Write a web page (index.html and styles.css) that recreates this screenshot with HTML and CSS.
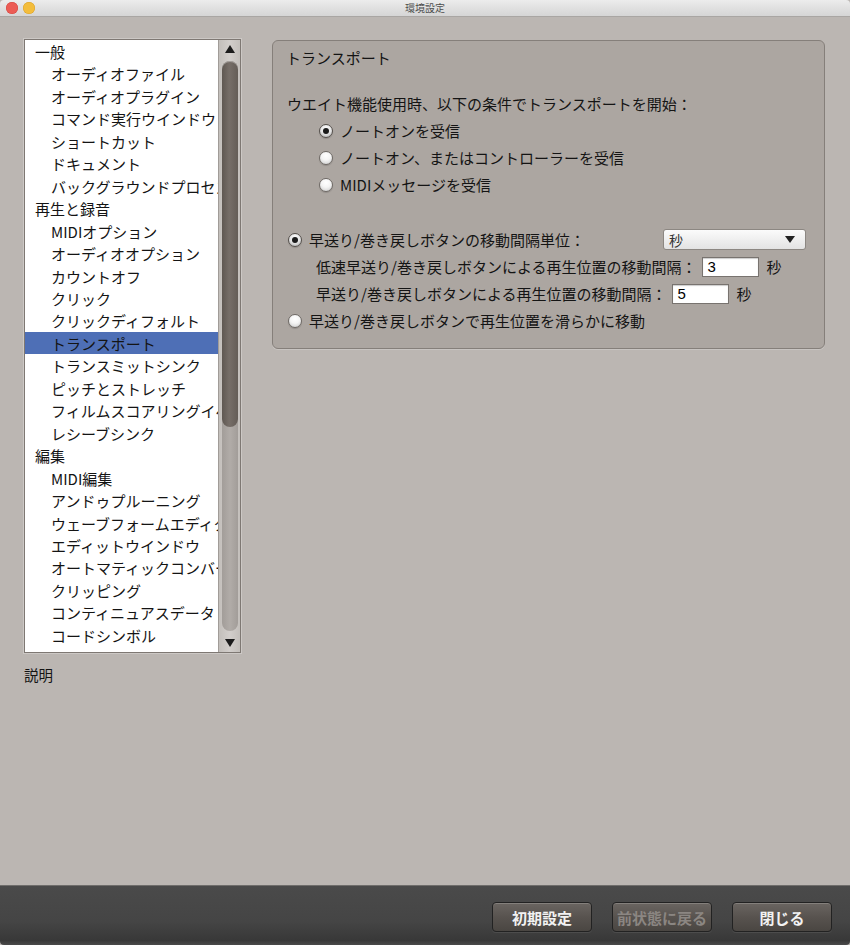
FILE: index.html
```html
<!DOCTYPE html>
<html lang="ja">
<head>
<meta charset="utf-8">
<title>環境設定</title>
<link rel="stylesheet" href="styles.css">
</head>
<body>
<div class="window">
  <header class="titlebar">
    <div class="lights"><i class="light red"></i><i class="light yellow"></i></div>
    <div class="title">環境設定</div>
    <div></div>
  </header>

  <main class="content">
    <aside class="sidebar">
      <div class="listbox">
        <ul class="tree">
          <li class="cat">一般</li>
          <li>オーディオファイル</li>
          <li>オーディオプラグイン</li>
          <li>コマンド実行ウインドウ</li>
          <li>ショートカット</li>
          <li>ドキュメント</li>
          <li>バックグラウンドプロセス</li>
          <li class="cat">再生と録音</li>
          <li>MIDIオプション</li>
          <li>オーディオオプション</li>
          <li>カウントオフ</li>
          <li>クリック</li>
          <li>クリックディフォルト</li>
          <li class="selected">トランスポート</li>
          <li>トランスミットシンク</li>
          <li>ピッチとストレッチ</li>
          <li>フィルムスコアリングイベント</li>
          <li>レシーブシンク</li>
          <li class="cat">編集</li>
          <li>MIDI編集</li>
          <li>アンドゥプルーニング</li>
          <li>ウェーブフォームエディタ</li>
          <li>エディットウインドウ</li>
          <li>オートマティックコンバート</li>
          <li>クリッピング</li>
          <li>コンティニュアスデータ</li>
          <li>コードシンボル</li>
        </ul>
        <div class="scrollbar">
          <span class="arrow up"></span>
          <div class="track"><div class="thumb"></div></div>
          <span class="arrow down"></span>
        </div>
      </div>
      <div class="desc">説明</div>
    </aside>

    <section class="panel">
      <div class="panel-title">トランスポート</div>
      <div class="row lead">ウエイト機能使用時、以下の条件でトランスポートを開始：</div>
      <div class="row opt"><span class="radio checked"></span>ノートオンを受信</div>
      <div class="row opt"><span class="radio"></span>ノートオン、またはコントローラーを受信</div>
      <div class="row opt"><span class="radio"></span>MIDIメッセージを受信</div>

      <div class="row group-start">
        <span class="radio checked"></span>早送り/巻き戻しボタンの移動間隔単位：
        <span class="select"><span>秒</span><span class="caret"></span></span>
      </div>
      <div class="row sub">低速早送り/巻き戻しボタンによる再生位置の移動間隔：<span class="field">3</span><span class="unit">秒</span></div>
      <div class="row sub">早送り/巻き戻しボタンによる再生位置の移動間隔：<span class="field">5</span><span class="unit">秒</span></div>
      <div class="row"><span class="radio"></span>早送り/巻き戻しボタンで再生位置を滑らかに移動</div>
    </section>
  </main>

  <footer class="bottombar">
    <button class="btn">初期設定</button>
    <button class="btn" disabled>前状態に戻る</button>
    <button class="btn">閉じる</button>
  </footer>
</div>
</body>
</html>
```

FILE: styles.css
```css
* { box-sizing: border-box; }

html, body {
  margin: 0;
  padding: 0;
  background: #bbb6b2;
}

body {
  font-family: "Noto Sans CJK JP", "Noto Sans", sans-serif;
  font-size: 15px;
  color: #141414;
}

.window {
  width: 850px;
  height: 945px;
  display: flex;
  flex-direction: column;
  background: #bbb6b2;
  overflow: hidden;
}

/* ---------- title bar ---------- */
.titlebar {
  height: 17px;
  flex: none;
  display: grid;
  grid-template-columns: 1fr auto 1fr;
  align-items: center;
  background: linear-gradient(#ececec, #d5d5d5);
  border-bottom: 1px solid #a9a6a3;
  border-radius: 4px 4px 0 0;
}

.lights {
  display: flex;
  gap: 5px;
  padding-left: 6px;
}

.light {
  width: 12px;
  height: 12px;
  border-radius: 50%;
  display: block;
}
.light.red { background: #ec5c55; box-shadow: inset 0 0 0 0.5px #d2463f; }
.light.yellow { background: #f3bd3c; box-shadow: inset 0 0 0 0.5px #d9a02a; }

.title {
  font-size: 10px;
  color: #4d4d4d;
  line-height: 16px;
}

/* ---------- main area ---------- */
.content {
  flex: 1;
  display: flex;
  align-items: flex-start;
  gap: 31px;
  padding: 22px 0 0 24px;
}

.sidebar {
  width: 217px;
  display: flex;
  flex-direction: column;
}

.listbox {
  height: 614px;
  display: flex;
  background: #fff;
  border: 1px solid #7e7873;
  box-shadow: 0 0 0 1px rgba(255,255,255,0.25);
}

.tree {
  list-style: none;
  margin: 0;
  padding: 0;
  flex: 1;
  min-width: 0;
  overflow: hidden;
}

.tree li {
  height: 22.46px;
  line-height: 23px;
  padding-left: 26px;
  white-space: nowrap;
  overflow: hidden;
}

.tree li.cat { padding-left: 10px; }

.tree li.selected { background: #4e6fb6; }

.scrollbar {
  width: 22px;
  flex: none;
  display: flex;
  flex-direction: column;
  align-items: center;
  background: linear-gradient(90deg, #c3bfbb, #d2cecb 50%, #c3bfbb);
  border-left: 1px solid #a19c98;
}

.arrow {
  width: 0;
  height: 0;
  border-left: 5px solid transparent;
  border-right: 5px solid transparent;
  flex: none;
}
.arrow.up {
  border-bottom: 8px solid #1c1c1c;
  margin: 5px 0 8px;
}
.arrow.down {
  border-top: 8px solid #1c1c1c;
  margin: 8px 0 5px;
}

.track {
  flex: 1;
  width: 16px;
  border-radius: 8px;
  background: linear-gradient(90deg, #a29d99, #b1aca8 50%, #a29d99);
  display: flex;
  flex-direction: column;
}

.thumb {
  height: 366px;
  border-radius: 8px;
  background: linear-gradient(90deg, #5f5852, #766e68 45%, #645d57);
  box-shadow: inset 0 1px 0 rgba(255,255,255,0.35);
}

.desc {
  margin-top: 12px;
  line-height: 20px;
  font-size: 14.5px;
}

/* ---------- settings panel ---------- */
.panel {
  width: 553px;
  margin-top: 1px;
  background: #aca6a1;
  border: 1px solid #857f7a;
  border-radius: 6px;
  padding: 3px 0 14px 0;
  box-shadow: 0 1px 0 rgba(255,255,255,0.2);
}

.panel-title {
  height: 27px;
  line-height: 27px;
  padding-left: 13px;
  margin-bottom: 19px;
}

.row {
  height: 27px;
  display: flex;
  align-items: center;
  padding-left: 15px;
  white-space: nowrap;
}

.row.lead { padding-left: 14px; }
.row.opt { padding-left: 46px; }
.row.sub { padding-left: 43px; }
.row.group-start { margin-top: 28px; }

.radio {
  width: 14px;
  height: 14px;
  border-radius: 50%;
  flex: none;
  margin-right: 7px;
  border: 1px solid #6f6a66;
  background: radial-gradient(circle at 50% 30%, #ffffff, #f4f4f4 45%, #c9c9c9);
  box-shadow: 0 1px 1px rgba(0,0,0,0.15);
  display: flex;
  align-items: center;
  justify-content: center;
}

.radio.checked {
  border-color: #55504c;
  background: radial-gradient(circle at 50% 30%, #fdfdfd, #e6e6e6 50%, #a9a9a9);
}

.radio.checked::after {
  content: "";
  width: 6px;
  height: 6px;
  border-radius: 50%;
  background: #1a1a1a;
}

.select {
  margin-left: auto;
  margin-right: 18px;
  width: 143px;
  height: 21px;
  display: flex;
  align-items: center;
  justify-content: space-between;
  padding: 0 10px 0 5px;
  background: linear-gradient(#fbfbfb, #e3e3e3);
  border: 1px solid #8c8782;
  border-radius: 3px;
  font-size: 14px;
  color: #333;
}

.caret {
  width: 0;
  height: 0;
  border-left: 5.5px solid transparent;
  border-right: 5.5px solid transparent;
  border-top: 7px solid #222;
}

.field {
  width: 57px;
  height: 20px;
  margin-left: 6px;
  background: #fff;
  border: 1px solid #78736f;
  box-shadow: inset 0 1px 1px rgba(0,0,0,0.2);
  line-height: 18px;
  padding-left: 4px;
  font-family: "Liberation Sans", "Noto Sans", sans-serif;
  font-size: 15px;
  color: #000;
}

.unit { margin-left: 7px; }

/* ---------- bottom bar ---------- */
.bottombar {
  height: 60px;
  flex: none;
  display: flex;
  justify-content: flex-end;
  gap: 20px;
  padding: 16px 18px 0 0;
  background: linear-gradient(#4a4a4a, #454545 60%, #383838 92%, #4a4a4a);
  border-top: 1px solid #6f6d6b;
  border-radius: 0 0 4px 4px;
}

.btn {
  width: 100px;
  height: 30px;
  border: 1px solid #222;
  border-radius: 4px;
  background: linear-gradient(#6a6561, #58534f 50%, #4a4642);
  box-shadow: inset 0 1px 0 rgba(255,255,255,0.18), 0 1px 0 rgba(255,255,255,0.08);
  color: #f2f2f2;
  font-family: "Noto Sans CJK JP", "Noto Sans", sans-serif;
  font-size: 15px;
  font-weight: 700;
  padding: 0;
}

.btn:disabled { color: #8b8682; }
```
